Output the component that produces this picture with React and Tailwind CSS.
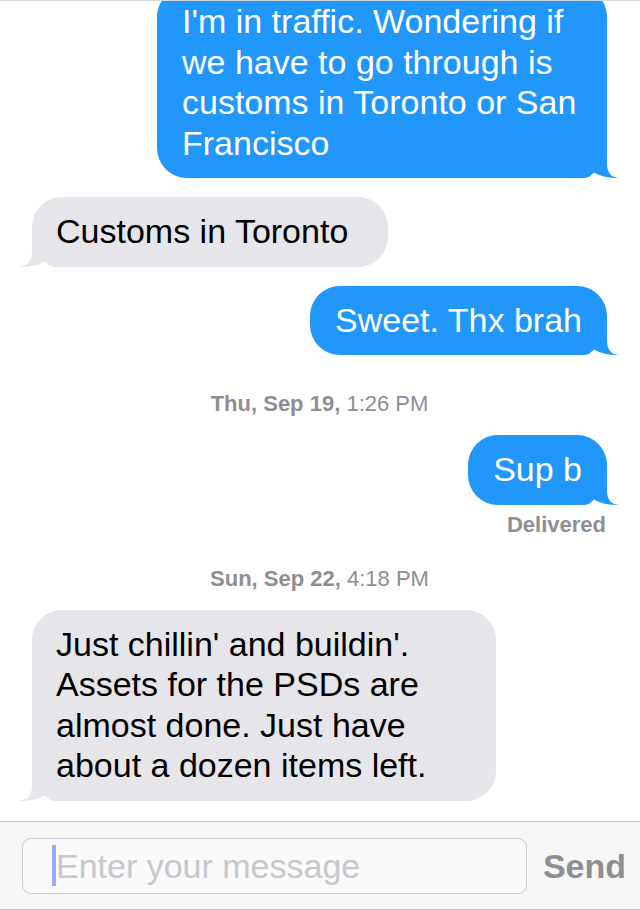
import React from "react";

function Tail({ side, color, tip }) {
  const d = `M -34 -34 L 0 -34 L 0 -15 C 0 -5 ${tip * 0.35} -0.5 ${tip} 0 C ${tip * 0.35} 0 -7 -1 -13.5 -6 C -15.5 -2.5 -18 -0.5 -22 0 L -34 0 Z`;
  const pos =
    side === "right"
      ? "absolute right-[-16px] bottom-0"
      : "absolute left-[-16px] bottom-0 -scale-x-100";
  return (
    <svg
      className={pos}
      width="50"
      height="35"
      viewBox="-34 -35 50 35"
      style={{ overflow: "visible" }}
    >
      <path d={d} fill={color} />
    </svg>
  );
}

function Out({ children, className = "", maxw = "max-w-[450px]" }) {
  return (
    <div className={`self-end relative ${maxw} rounded-[30px] bg-[#2196fb] px-[25px] pt-[14px] pb-[15px] text-white ${className}`}>
      <Tail side="right" color="#2196fb" tip={12} />
      <span className="relative">{children}</span>
    </div>
  );
}

function In({ children, className = "", maxw = "max-w-[464px]" }) {
  return (
    <div className={`self-start relative ${maxw} rounded-[30px] bg-[#e5e5ea] pl-[24px] pt-[14px] pb-[15px] text-black ${className}`}>
      <Tail side="left" color="#e5e5ea" tip={15} />
      <span className="relative">{children}</span>
    </div>
  );
}

function Stamp({ bold, rest, className = "" }) {
  return (
    <div className={`self-center text-[22px] leading-[26px] text-[#8e8e93] ${className}`}>
      <span className="font-bold">{bold}</span> {rest}
    </div>
  );
}

export default function App() {
  return (
    <div
      className="w-full h-[910px] flex flex-col bg-white overflow-hidden"
      style={{ fontFamily: '"Liberation Sans", Arial, Helvetica, sans-serif' }}
    >
      <div className="flex-1 overflow-hidden border-t border-[#d3d8dd]">
        <div className="flex flex-col pl-[32px] pr-[33px] text-[34px] leading-[40.5px]">
          <Out className="-mt-[14px]">
            I'm in traffic. Wondering if we have to go through is customs in Toronto or San Francisco
          </Out>
          <In className="mt-[19px] pr-[40px]">Customs in Toronto</In>
          <Out className="mt-[19px]">Sweet. Thx brah</Out>
          <Stamp className="mt-[36px]" bold="Thu, Sep 19," rest="1:26 PM" />
          <Out className="mt-[18px]">Sup b</Out>
          <div className="self-end mt-[7px] mr-[1px] text-[22px] leading-[26px] font-bold text-[#8e8e93]">
            Delivered
          </div>
          <Stamp className="mt-[28px]" bold="Sun, Sep 22," rest="4:18 PM" />
          <In className="mt-[18px] pr-[24px]">
            Just chillin' and buildin'. Assets for the PSDs are almost done. Just have about a dozen items left.
          </In>
        </div>
      </div>
      <div className="h-[89px] shrink-0 border-t border-b border-[#c4c4c4] bg-[#f7f7f7] flex items-center pl-[22px] pr-[14px]">
        <div className="h-[56px] w-[505px] rounded-[9px] border border-[#cbcbcf] bg-[#fafafa] flex items-center pl-[29px]">
          <div className="w-[4px] h-[41px] bg-[#9aaaf5]"></div>
          <span className="text-[34px] leading-[40px] text-[#c7c7cd]">Enter your message</span>
        </div>
        <div className="ml-auto text-[34px] leading-[40px] font-bold text-[#8e8e93]">Send</div>
      </div>
    </div>
  );
}
